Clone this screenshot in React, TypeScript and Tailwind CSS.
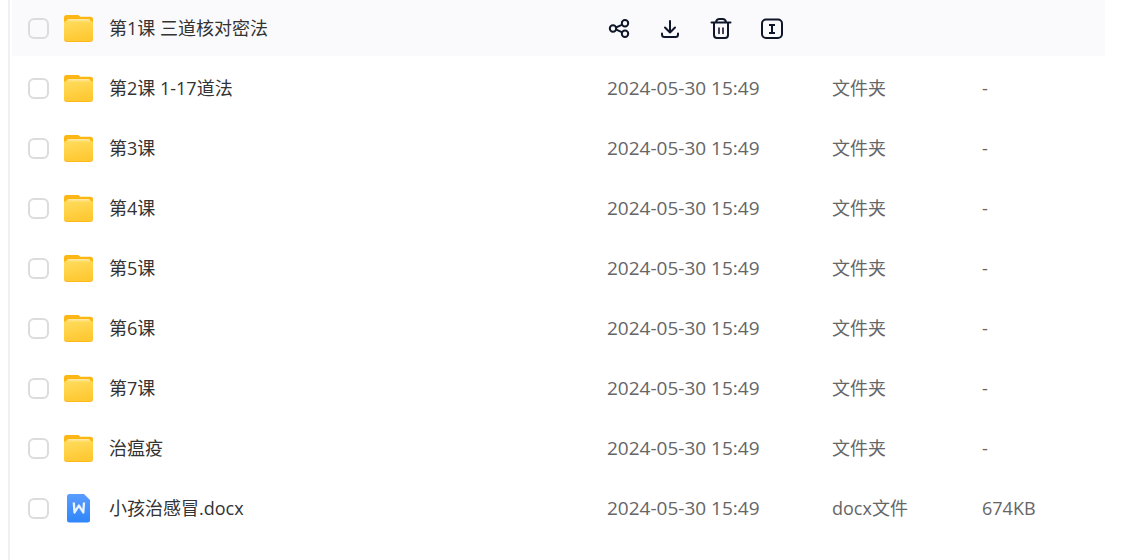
import type { ReactNode } from "react";

type Entry = {
  name: string;
  modified: string;
  kind: string;
  size: string;
  doc?: boolean;
  active?: boolean;
};

const date = "2024-05-30 15:49";

const entries: Entry[] = [
  { name: "第1课 三道核对密法", modified: date, kind: "文件夹", size: "-", active: true },
  { name: "第2课 1-17道法", modified: date, kind: "文件夹", size: "-" },
  { name: "第3课", modified: date, kind: "文件夹", size: "-" },
  { name: "第4课", modified: date, kind: "文件夹", size: "-" },
  { name: "第5课", modified: date, kind: "文件夹", size: "-" },
  { name: "第6课", modified: date, kind: "文件夹", size: "-" },
  { name: "第7课", modified: date, kind: "文件夹", size: "-" },
  { name: "治瘟疫", modified: date, kind: "文件夹", size: "-" },
  { name: "小孩治感冒.docx", modified: date, kind: "docx文件", size: "674KB", doc: true },
];

function FolderIcon() {
  return (
    <svg width="30" height="30" viewBox="0 -2 30 30" aria-hidden="true">
      <defs>
        <linearGradient id="folder-front" x1="0" y1="0" x2="0.3" y2="1">
          <stop offset="0" stopColor="#ffdc5e" />
          <stop offset="1" stopColor="#ffc933" />
        </linearGradient>
        <linearGradient id="folder-paper" x1="0" y1="0" x2="0" y2="1">
          <stop offset="0" stopColor="#ffe9a8" />
          <stop offset="1" stopColor="#ffdc5e" />
        </linearGradient>
      </defs>
      <path d="M0 2.500Q0 0 2.500 0h11q1.200 0 2 .9l.8.8h10.200Q29 1.700 29 4.200V14H0z" fill="#fdb714" />
      <path d="M0 8q0-2 2-2h25q2 0 2 2v16q0 3-3 3H3q-3 0-3-3z" fill="#fdb91c" />
      <path d="M0 8q0-2 2-2h25q2 0 2 2v15q0 3-3 3H3q-3 0-3-3z" fill="url(#folder-front)" />
      <path d="M2.500 7q0-3 2.500-3h19q2.500 0 2.500 3z" fill="url(#folder-paper)" />
    </svg>
  );
}

function DocIcon() {
  return (
    <svg width="30" height="30" viewBox="0 0 30 30" aria-hidden="true">
      <defs>
        <linearGradient id="doc-body" x1="0" y1="0" x2="0" y2="1">
          <stop offset="0" stopColor="#5a9dff" />
          <stop offset="1" stopColor="#2f86fa" />
        </linearGradient>
      </defs>
      <path d="M3 3.500Q3 1 5.500 1H20l6 6v20q0 2.500-2.500 2.500h-18Q3 29.500 3 27z" fill="url(#doc-body)" />
      <path d="M9.800 9.500l.7 10 4.400-7 4.400 7 .7-10" fill="none" stroke="#eaf3ff" strokeWidth="2.300" strokeLinejoin="round" />
    </svg>
  );
}

function ActionButton({ label, children }: { label: string; children: ReactNode }) {
  return (
    <button type="button" aria-label={label} title={label} className="size-6 cursor-pointer">
      <svg
        width="24"
        height="24"
        viewBox="0 0 24 24"
        fill="none"
        stroke="#0f1629"
        strokeWidth="2"
        strokeLinecap="round"
        strokeLinejoin="round"
        aria-hidden="true"
      >
        {children}
      </svg>
    </button>
  );
}

function RowActions() {
  return (
    <div className="flex items-center gap-[27px]">
      <ActionButton label="分享">
        <circle cx="6" cy="12.500" r="3.200" />
        <circle cx="18" cy="7.300" r="3.200" />
        <circle cx="18" cy="17.700" r="3.200" />
        <path d="M9.200 11.300l5.600-2.500M9.200 13.700l5.600 2.500" />
      </ActionButton>
      <ActionButton label="下载">
        <path d="M12 5v11.500M7 11.500l5 5 5-5" />
        <path d="M4 17.500v1q0 2.500 2.500 2.500h11q2.500 0 2.500-2.500v-1" />
      </ActionButton>
      <ActionButton label="删除">
        <path d="M2.500 6.500h19M7 6q.5-3 3.500-3h3q3 0 3.500 3" />
        <path d="M5 7v12q0 3 3 3h8q3 0 3-3V7" />
        <path d="M10 12v5.500M14 12v5.500" strokeWidth="1.600" />
      </ActionButton>
      <ActionButton label="重命名">
        <rect x="2" y="3.500" width="20" height="18.500" rx="4" />
        <path d="M9 9h6M9 17h6M12 9v8" strokeLinecap="butt" />
      </ActionButton>
    </div>
  );
}

function FileRow({ entry, id }: { entry: Entry; id: string }) {
  return (
    <tr className={entry.active ? "h-14 bg-[#fafafc]" : "h-14"}>
      <td className="p-0">
        <div className="flex items-center pl-4">
          <input
            id={id}
            type="checkbox"
            className="size-[21px] shrink-0 appearance-none rounded-md border-2 border-[#dcdcde] bg-transparent checked:bg-[#2f86fa]"
          />
          <label htmlFor={id} className="flex items-center gap-[15px] pl-[15px] text-[#333333]">
            {entry.doc ? <DocIcon /> : <FolderIcon />}
            <span>{entry.name}</span>
          </label>
        </div>
      </td>
      <td className="p-0 text-[19px]">{entry.active ? <RowActions /> : entry.modified}</td>
      <td className="p-0">{entry.active ? null : entry.kind}</td>
      <td className="p-0">{entry.active ? null : entry.size}</td>
    </tr>
  );
}

export default function App() {
  return (
    <main className="min-h-screen bg-white pl-2 font-['Open_Sans','Noto_Sans_CJK_SC',sans-serif]">
      <div className="flow-root min-h-screen border-l-2 border-[#f0f0f2] pr-[42px] pl-0.5">
        <table className="-mt-1 w-full table-fixed border-separate border-spacing-x-0 border-spacing-y-1 text-[18px] leading-6 text-[#666666]">
          <colgroup>
            <col />
            <col className="w-[225px]" />
            <col className="w-[150px]" />
            <col className="w-[123px]" />
          </colgroup>
          <tbody>
            {entries.map((entry, i) => (
              <FileRow key={entry.name} entry={entry} id={`file-${i}`} />
            ))}
          </tbody>
        </table>
      </div>
    </main>
  );
}
